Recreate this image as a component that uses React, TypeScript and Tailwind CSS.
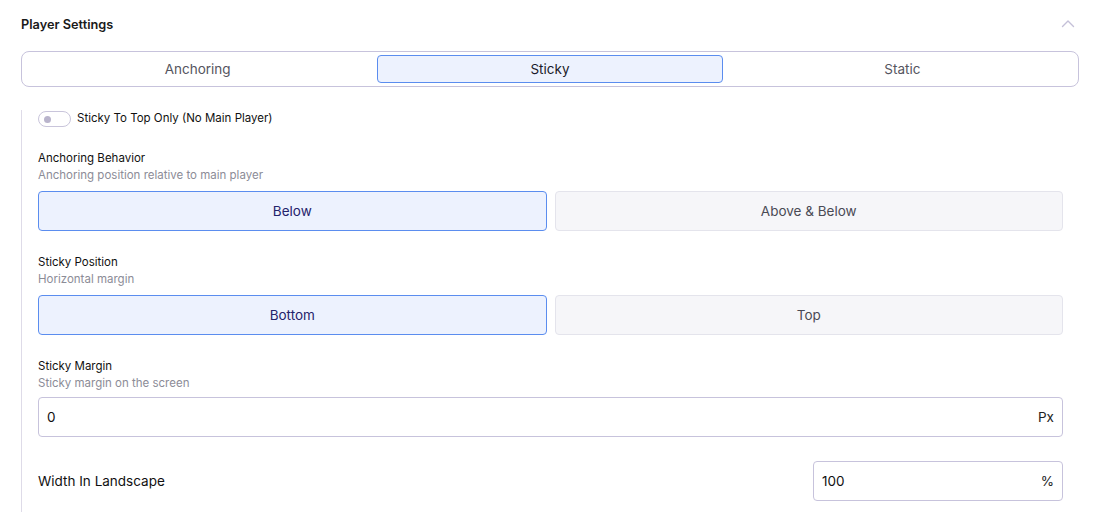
import { useState } from "react";

type Opt = { value: string; label: string };

const TABS: Opt[] = [
  { value: "anchoring", label: "Anchoring" },
  { value: "sticky", label: "Sticky" },
  { value: "static", label: "Static" },
];

function Segmented({ options, value, onChange }: { options: Opt[]; value: string; onChange: (v: string) => void }) {
  return (
    <div className="mt-2 grid grid-cols-2 gap-2">
      {options.map((o) => (
        <button
          key={o.value}
          onClick={() => onChange(o.value)}
          className={`h-10 rounded-[4px] border text-[13.5px] ${
            value === o.value
              ? "border-[#5b8def] bg-[#edf2fe] text-[#25236b]"
              : "border-[#e4e4ec] bg-[#f6f6f9] text-[#4a4a55]"
          }`}
        >
          {o.label}
        </button>
      ))}
    </div>
  );
}

function FieldLabel({ title, hint }: { title: string; hint: string }) {
  return (
    <div className="text-[11.5px] leading-4">
      <div className="text-[#111]">{title}</div>
      <div className="mt-[1px] text-[#8c8c97]">{hint}</div>
    </div>
  );
}

export default function App() {
  const [tab, setTab] = useState("sticky");
  const [topOnly, setTopOnly] = useState(false);
  const [behavior, setBehavior] = useState("below");
  const [position, setPosition] = useState("bottom");

  return (
    <div className="h-[512px] overflow-hidden bg-white pl-[21px] pr-[18px] font-['Inter',sans-serif] text-[#111]">
      {/* header */}
      <div className="flex h-[49px] items-center justify-between pt-[1px]">
        <div className="text-[12.75px] font-semibold text-[#1a1a1a]">Player Settings</div>
        <svg width="14" height="10" viewBox="0 0 14 10" fill="none" stroke="#c4c0d8" strokeWidth="1.4" strokeLinecap="round" strokeLinejoin="round" className="mr-[4px] mt-[-3px]">
          <path d="M1.5 7.5L7 2l5.5 5.5" />
        </svg>
      </div>

      {/* mode tabs */}
      <div className="mt-[2px] grid h-9 grid-cols-3 items-center gap-[7px] rounded-lg border border-[#c7c3dc] px-[3px]">
        {TABS.map((t) => (
          <button
            key={t.value}
            onClick={() => setTab(t.value)}
            className={`h-7 rounded-[4px] border text-[13.5px] ${
              tab === t.value
                ? "border-[#5b8def] bg-[#edf2fe] text-[#1a1a2a]"
                : "border-transparent text-[#555560]"
            }`}
          >
            {t.label}
          </button>
        ))}
      </div>

      <div className="mt-[23px] border-l border-[#dedbe8] pl-4 pr-4">
        <div className="flex h-[18px] items-center gap-[6px]">
          <button
            onClick={() => setTopOnly(!topOnly)}
            className="flex h-4 w-[33px] items-center rounded-full border border-[#c9c5db] px-[5px]"
          >
            <span className={`h-[7px] w-[7px] rounded-full bg-[#b9b4cc] ${topOnly ? "ml-auto" : ""}`} />
          </button>
          <span className="text-[11.5px] text-[#111]">Sticky To Top Only (No Main Player)</span>
        </div>

        <div className="mt-[22px]">
          <FieldLabel title="Anchoring Behavior" hint="Anchoring position relative to main player" />
          <Segmented
            options={[
              { value: "below", label: "Below" },
              { value: "both", label: "Above & Below" },
            ]}
            value={behavior}
            onChange={setBehavior}
          />
        </div>

        <div className="mt-[23px]">
          <FieldLabel title="Sticky Position" hint="Horizontal margin" />
          <Segmented
            options={[
              { value: "bottom", label: "Bottom" },
              { value: "top", label: "Top" },
            ]}
            value={position}
            onChange={setPosition}
          />
        </div>

        <div className="mt-[23px]">
          <FieldLabel title="Sticky Margin" hint="Sticky margin on the screen" />
          <div className="mt-[6px] flex h-10 items-center rounded-[4px] border border-[#c7c3dc] px-2 text-[13.5px]">
            <span className="flex-1">0</span>
            <span className="text-[#222]">Px</span>
          </div>
        </div>

        <div className="mt-6 flex items-center justify-between pb-4">
          <span className="text-[13.5px] text-[#111]">Width In Landscape</span>
          <div className="flex h-10 w-[250px] items-center rounded-[4px] border border-[#c7c3dc] px-2 text-[13.5px]">
            <span className="flex-1">100</span>
            <span className="text-[#222]">%</span>
          </div>
        </div>
      </div>
    </div>
  );
}
